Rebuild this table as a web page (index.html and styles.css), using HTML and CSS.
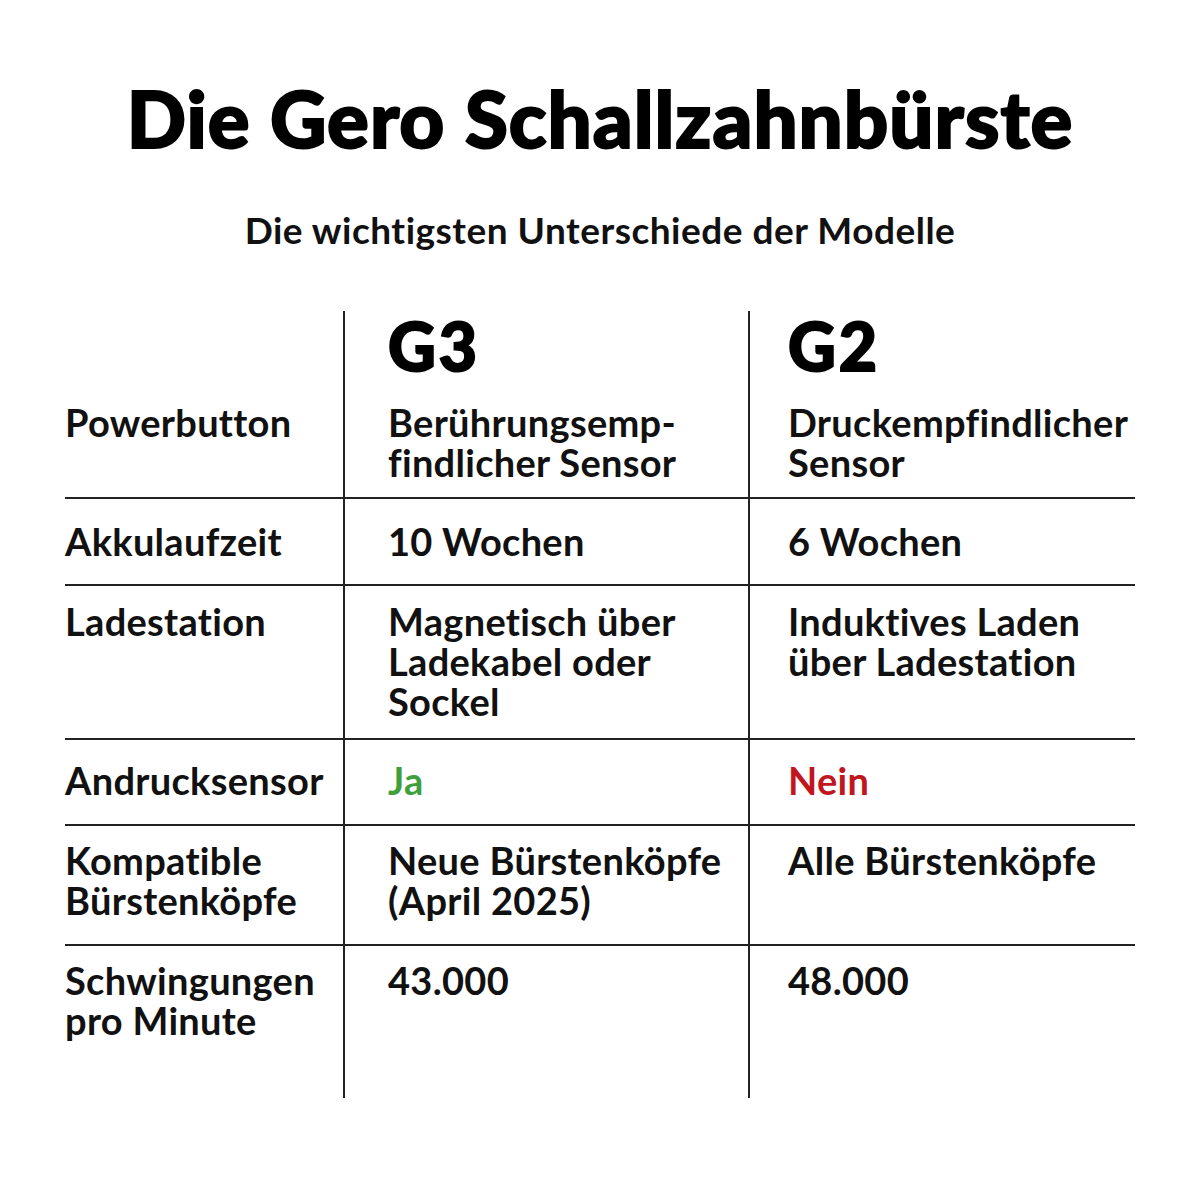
FILE: index.html
```html
<!DOCTYPE html>
<html lang="de">
<head>
<meta charset="utf-8">
<title>Die Gero Schallzahnbürste</title>
<link rel="stylesheet" href="styles.css">
</head>
<body>
<main class="page">
  <h1 class="title">Die Gero Schallzahnbürste</h1>
  <p class="subtitle">Die wichtigsten Unterschiede der Modelle</p>
  <div class="compare">
    <div class="row row-head">
      <div class="cell label"></div>
      <div class="cell c2 model">G3</div>
      <div class="cell c3 model">G2</div>
    </div>
    <div class="row row-power">
      <div class="cell label">Powerbutton</div>
      <div class="cell c2">Berührungsemp-<br>findlicher Sensor</div>
      <div class="cell c3">Druckempfindlicher<br>Sensor</div>
    </div>
    <div class="row row-akku">
      <div class="cell label">Akkulaufzeit</div>
      <div class="cell c2">10 Wochen</div>
      <div class="cell c3">6 Wochen</div>
    </div>
    <div class="row row-lade">
      <div class="cell label">Ladestation</div>
      <div class="cell c2">Magnetisch über<br>Ladekabel oder<br>Sockel</div>
      <div class="cell c3">Induktives Laden<br>über Ladestation</div>
    </div>
    <div class="row row-andruck">
      <div class="cell label">Andrucksensor</div>
      <div class="cell c2 yes">Ja</div>
      <div class="cell c3 no">Nein</div>
    </div>
    <div class="row row-kompat">
      <div class="cell label">Kompatible<br>Bürstenköpfe</div>
      <div class="cell c2">Neue Bürstenköpfe<br>(April 2025)</div>
      <div class="cell c3">Alle Bürstenköpfe</div>
    </div>
    <div class="row row-schwing">
      <div class="cell label">Schwingungen<br>pro Minute</div>
      <div class="cell c2">43.000</div>
      <div class="cell c3">48.000</div>
    </div>
  </div>
</main>
</body>
</html>
```

FILE: styles.css
```css
html, body {
  margin: 0;
  padding: 0;
  background: #ffffff;
}

body {
  font-family: "Lato", "Noto Sans", "Liberation Sans", sans-serif;
  font-variant-ligatures: none;
  color: #111111;
}

.page {
  width: 1200px;
  display: flex;
  flex-direction: column;
  align-items: center;
}

.title {
  margin: 80px 0 0;
  font-size: 78px;
  line-height: 77px;
  font-weight: 900;
  letter-spacing: 1px;
  color: #000000;
  -webkit-text-stroke: 2px #000000;
  text-align: center;
}

.subtitle {
  margin: 53px 0 0;
  font-size: 37px;
  line-height: 40px;
  font-weight: 700;
  letter-spacing: 0.5px;
  text-align: center;
}

.compare {
  margin: 61px 0 0 65px;
  align-self: flex-start;
  width: 1070px;
  display: grid;
  grid-template-columns: 278px 405px 387px;
}

.row {
  display: contents;
}

.cell {
  font-size: 38px;
  line-height: 40px;
  font-weight: 700;
  letter-spacing: 0.3px;
  white-space: nowrap;
  border-bottom: 2px solid #222222;
}

.label {
  padding-left: 0;
}

.c2 {
  border-left: 2px solid #222222;
  padding-left: 43px;
}

.c3 {
  border-left: 2px solid #222222;
  padding-left: 38px;
}

.model {
  font-size: 66px;
  line-height: 62px;
  font-weight: 900;
  letter-spacing: 3px;
  color: #000000;
  -webkit-text-stroke: 2px #000000;
}

.row-head > .cell {
  padding-top: 4px;
  padding-bottom: 3px;
  border-bottom: none;
}

.row-power > .cell {
  padding-top: 22px;
  padding-bottom: 15px;
}

.row-akku > .cell {
  padding-top: 22px;
  padding-bottom: 23px;
}

.row-lade > .cell {
  padding-top: 15px;
  padding-bottom: 17px;
}

.row-andruck > .cell {
  padding-top: 20px;
  padding-bottom: 24px;
}

.row-kompat > .cell {
  padding-top: 14px;
  padding-bottom: 24px;
}

.row-schwing > .cell {
  padding-top: 14px;
  padding-bottom: 58px;
  border-bottom: none;
}

.yes {
  color: #3f9f3c;
}

.no {
  color: #c1161e;
}
```
